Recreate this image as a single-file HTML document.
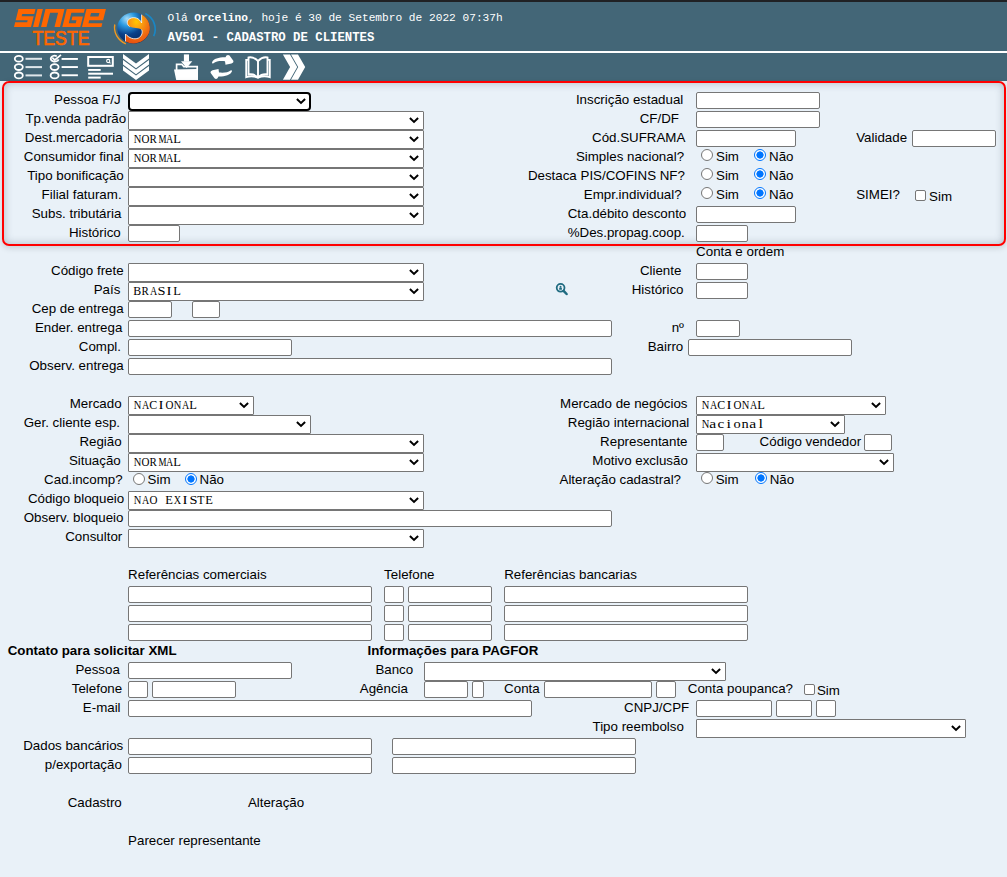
<!DOCTYPE html>
<html><head><meta charset="utf-8"><title>AV501</title>
<style>
html,body{margin:0;padding:0;}
body{width:1007px;height:877px;overflow:hidden;background:#e9f1f8;}
#pg{position:relative;width:1007px;height:877px;overflow:hidden;background:#e9f1f8;font-family:"Liberation Sans",sans-serif;color:#000;}
#topbar{position:absolute;left:0;top:0;width:1007px;height:2px;background:#202124;}
#hdr{position:absolute;left:0;top:2px;width:1007px;height:49px;background:#436677;}
#wl{position:absolute;left:0;top:51px;width:1007px;height:2px;background:#fff;}
#tb{position:absolute;left:0;top:53px;width:1007px;height:28px;background:#436677;}
#box{position:absolute;left:1.5px;top:81.4px;width:1000px;height:160.3px;border:2px solid #f00;border-radius:7px;box-shadow:inset 0 0 8px rgba(50,70,90,.32),0 2px 6px rgba(0,0,0,.14);}
.t,.b{position:absolute;font-size:13.333px;line-height:15px;white-space:nowrap;}
.b{font-weight:bold;}
.i{position:absolute;box-sizing:border-box;background:#fff;border:1px solid #767676;border-radius:2px;}
.s{position:absolute;box-sizing:border-box;height:19px;background:#fff;border:1px solid #767676;border-radius:1px;}
.s.f{border:2px solid #000;border-radius:4px;}
.sv{position:absolute;left:4px;top:1px;font-family:"Liberation Serif",serif;font-size:12.5px;line-height:15px;white-space:pre;}
.sv i{display:inline-block;width:8px;text-align:center;font-style:normal;}
.sv i b{display:inline-block;font-weight:normal;}
.ch{position:absolute;right:3.9px;top:4.9px;}
.s.f .ch{right:2.9px;top:3.9px;}
.r{position:absolute;box-sizing:border-box;width:12px;height:12px;border:1px solid #767676;border-radius:50%;background:#fff;}
.r.c{border:1px solid #0075ff;background:radial-gradient(circle,#0075ff 0,#0075ff 3.3px,#fff 3.9px,#fff 100%);}
.cb{position:absolute;box-sizing:border-box;width:11px;height:11px;border:1px solid #767676;border-radius:2px;background:#fff;}
.lens{position:absolute;}
.hs{position:absolute;color:#fff;font-family:"Liberation Mono",monospace;white-space:pre;}
.ico{position:absolute;}

</style></head><body>
<div id="pg">
<div id="topbar"></div>
<div id="hdr"></div>
<div id="wl"></div>
<div id="tb"></div>
<!-- SINGE logo -->
<svg class="ico" style="left:10px;top:6px" width="100" height="42" viewBox="0 0 100 42">
 <g fill="#ff6600" transform="translate(4,3) matrix(1,0,-0.25,1,4.5,0)">
  <!-- S: origin x=0 width 17, y 0..18 -->
  <path d="M0 0H17V5H5V7.3H17V18H0V13.3H12V11.3H0Z"/>
  <!-- I -->
  <path d="M19 0H24.4V18H19Z"/>
  <!-- n -->
  <path d="M27 0H46V18H40.5V3.7H32.5V18H27Z"/>
  <!-- G -->
  <path d="M48.3 0H66.3V3.8H53.8V14.3H60.8V11.2H55.8V7.6H66.3V18H48.3Z"/>
  <!-- e -->
  <path d="M68 0H87.4V11.2H73.5V14.2H87.4V18H68ZM73.5 3.9V7.6H81.9V3.9Z" fill-rule="evenodd"/>
 </g>
 <text x="22.5" y="39.3" fill="#ff6600" stroke="#ff6600" stroke-width="0.7" font-family="Liberation Sans" font-size="20.5" textLength="57" lengthAdjust="spacingAndGlyphs">TESTE</text>
</svg>
<!-- sphere logo -->
<svg class="ico" style="left:108px;top:6px" width="50" height="44" viewBox="0 0 50 44">
 <defs>
  <radialGradient id="gb" cx="0.3" cy="0.2" r="0.85"><stop offset="0" stop-color="#a8dcf8"/><stop offset="0.28" stop-color="#2a9ae0"/><stop offset="0.6" stop-color="#0b418a"/><stop offset="1" stop-color="#04235a"/></radialGradient>
  <radialGradient id="go" cx="0.45" cy="0.25" r="0.75"><stop offset="0" stop-color="#ffc800"/><stop offset="0.3" stop-color="#faa010"/><stop offset="0.7" stop-color="#f06e12"/><stop offset="1" stop-color="#e8520e"/></radialGradient>
 </defs>
 <path d="M6.8 18.5 A18.7 17.7 0 0 0 17.8 37.8" fill="none" stroke="#f59a1e" stroke-width="1.4"/>
 <path d="M37.3 7.6 A18.7 17.7 0 0 1 45.7 30.2" fill="none" stroke="#1a86c4" stroke-width="1.7"/>
 <ellipse cx="25.6" cy="22" rx="16.3" ry="15.4" fill="url(#gb)"/>
 <path d="M33.6 8.6 A16.3 15.4 0 1 1 17.5 35.4 L17.5 28 C21 32 26 34 30.5 32 C34 30 35 26 33.5 23.5 C31 21.5 25 22.5 21.5 20.5 C18.5 18.5 18.5 14.5 22 12.5 C26 10.5 31.5 12 33.6 17 Z" fill="url(#go)"/>
 <path d="M33.6 8.6 L33.6 17 C31.5 12 26 10.5 22 12.5 C18.5 14.5 18.5 18.5 21.5 20.5" fill="none" stroke="#fff" stroke-width="0.8"/>
 <path d="M33.5 23.5 C35 26 34 30 30.5 32 C26 34 21 32 17.5 28 L17.5 35.4" fill="none" stroke="#fff" stroke-width="0.8"/>
</svg>
<span class="hs" style="left:167.5px;top:11px;font-size:11.18px;line-height:14px">Olá <b>Orcelino</b>, hoje é 30 de Setembro de 2022 07:37h</span>
<span class="hs" style="left:167.5px;top:31px;font-size:12.32px;line-height:14px;font-weight:bold">AV501 - CADASTRO DE CLIENTES</span>
<!-- toolbar icons -->
<svg class="ico" style="left:0px;top:53px" width="320" height="28" viewBox="0 53 320 28">
 <g fill="none" stroke="#fff" stroke-width="1.8">
  <ellipse cx="18.8" cy="58.8" rx="4" ry="2.9"/>
  <ellipse cx="18.8" cy="67.1" rx="4" ry="2.9"/>
  <ellipse cx="18.8" cy="75.4" rx="4" ry="2.9"/>
  <ellipse cx="54.6" cy="67.1" rx="4" ry="2.9"/>
  <ellipse cx="54.6" cy="75.4" rx="4" ry="2.9"/>
  <path d="M56.8 56.2A4 2.9 0 1 0 58.6 59.4"/>
  <path d="M52.3 57.6L54.8 60L61 54.8" stroke-width="1.7"/>
 </g>
 <g fill="#dfe6ea">
  <rect x="25.5" y="57.8" width="16.5" height="2"/>
  <rect x="25.5" y="66.1" width="16.5" height="2"/>
  <rect x="25.5" y="74.4" width="16.5" height="2"/>
 </g>
 <g fill="#fff">
  <rect x="61.6" y="58" width="16.3" height="1.9"/>
  <rect x="61.6" y="66.1" width="16.3" height="1.9"/>
  <rect x="61.6" y="74.3" width="16.3" height="1.9"/>
 </g>
 <!-- icon 3 -->
 <rect x="88.2" y="57" width="24.6" height="8.8" fill="none" stroke="#fff" stroke-width="2"/>
 <circle cx="108.2" cy="61" r="1.6" fill="none" stroke="#fff" stroke-width="1.1"/>
 <path d="M109.3 62.1l1.2 1.2" stroke="#fff" stroke-width="1.1"/>
 <g fill="#fff">
  <rect x="88.2" y="69" width="12.5" height="1.9"/>
  <rect x="88.2" y="72.7" width="24.8" height="2"/>
  <rect x="88.2" y="76.6" width="12.5" height="2"/>
 </g>
 <!-- icon 4 triple chevron -->
 <g fill="#fff">
  <path d="M123 54L136 63.6L149 54V58.6L136 68.2L123 58.6Z"/>
  <path d="M123 60L136 69.6L149 60V64.6L136 74.2L123 64.6Z"/>
  <path d="M123 66L136 75.6L149 66V70.6L136 80L123 70.6Z"/>
 </g>
 <!-- icon 5 folder download -->
 <path d="M176.6 70V64.3H181.8L183.8 66.7H197.2V70" fill="none" stroke="#fff" stroke-width="1.7"/>
 <g fill="#fff">
  <rect x="183.9" y="54.4" width="5.1" height="7.2"/>
  <path d="M181 61.2H192.3L186.6 68Z"/>
  <path d="M174 69.6L198 69V80H176.2Z"/>
 </g>
 <!-- icon 6 refresh -->
 <g fill="#fff">
  <path d="M212 62.5C213.5 58.5 219 57.2 225.5 57.3L226.5 55.5Q228 54.3 229.5 55.5L233.5 61Q233.8 62.8 231.5 63.5L225.5 64.8L225 61.2C220 60.8 216 61.2 213.5 63.2Q212 64 212 62.5Z"/>
  <path d="M232 71.3C230.5 75.3 225 76.6 218.5 76.5L217.5 78.3Q216 79.5 214.5 78.3L210.5 72.8Q210.2 71 212.5 70.3L218.5 69L219 72.6C224 73 228 72.6 230.5 70.6Q232 69.8 232 71.3Z"/>
 </g>
 <!-- icon 7 book -->
 <g fill="none" stroke="#fff" stroke-width="1.9">
  <path d="M258 61C255 58 251 57 248.5 57.5V74.5C251.5 74 255 74.5 258 77.5C261 74.5 264.5 74 267.5 74.5V57.5C265 57 261 58 258 61Z"/>
  <path d="M258 61V77"/>
  <path d="M248.6 59.8H246.2V77.2C250 75.8 254.5 76.2 258 77.6C261.5 76.2 266 75.8 269.8 77.2V59.8H267.4" stroke-width="1.8"/>
 </g>
 <!-- icon 8 double chevron -->
 <g fill="#fff">
  <path d="M282.9 54.5H290L297.2 67.1L290 79.8H282.9L290.1 67.1Z"/>
  <path d="M291 54.5H298L305.2 67.1L298 79.8H291L298.2 67.1Z"/>
 </g>
</svg>

<div id="box"></div>
<span class="t" style="left:54.0px;top:91.9px">Pessoa F/J</span>
<span class="t" style="left:25.4px;top:110.9px">Tp.venda padrão</span>
<span class="t" style="left:24.8px;top:129.9px">Dest.mercadoria</span>
<span class="t" style="left:23.8px;top:148.9px">Consumidor final</span>
<span class="t" style="left:27.2px;top:167.9px">Tipo bonificação</span>
<span class="t" style="left:41.6px;top:186.9px">Filial faturam.</span>
<span class="t" style="left:31.7px;top:205.9px">Subs. tributária</span>
<span class="t" style="left:68.9px;top:224.9px">Histórico</span>
<div class="s f" style="left:128px;top:92px;width:183px"><svg class="ch" width="10" height="7" viewBox="0 0 10 7"><path d="M0.9 1.1L5 4.9L9.1 1.1" fill="none" stroke="#000" stroke-width="2"/></svg></div>
<div class="s" style="left:128px;top:111px;width:296px"><svg class="ch" width="10" height="7" viewBox="0 0 10 7"><path d="M0.9 1.1L5 4.9L9.1 1.1" fill="none" stroke="#000" stroke-width="2"/></svg></div>
<div class="s" style="left:128px;top:130px;width:296px"><span class="sv"><i><b style="transform:scaleX(0.84)">N</b></i><i><b style="transform:scaleX(0.88)">O</b></i><i><b style="transform:scaleX(0.88)">R</b></i><i><b style="transform:scaleX(0.72)">M</b></i><i><b style="transform:scaleX(0.8)">A</b></i><i><b style="transform:scaleX(1.0)">L</b></i></span><svg class="ch" width="10" height="7" viewBox="0 0 10 7"><path d="M0.9 1.1L5 4.9L9.1 1.1" fill="none" stroke="#000" stroke-width="2"/></svg></div>
<div class="s" style="left:128px;top:149px;width:296px"><span class="sv"><i><b style="transform:scaleX(0.84)">N</b></i><i><b style="transform:scaleX(0.88)">O</b></i><i><b style="transform:scaleX(0.88)">R</b></i><i><b style="transform:scaleX(0.72)">M</b></i><i><b style="transform:scaleX(0.8)">A</b></i><i><b style="transform:scaleX(1.0)">L</b></i></span><svg class="ch" width="10" height="7" viewBox="0 0 10 7"><path d="M0.9 1.1L5 4.9L9.1 1.1" fill="none" stroke="#000" stroke-width="2"/></svg></div>
<div class="s" style="left:128px;top:168px;width:296px"><svg class="ch" width="10" height="7" viewBox="0 0 10 7"><path d="M0.9 1.1L5 4.9L9.1 1.1" fill="none" stroke="#000" stroke-width="2"/></svg></div>
<div class="s" style="left:128px;top:187px;width:296px"><svg class="ch" width="10" height="7" viewBox="0 0 10 7"><path d="M0.9 1.1L5 4.9L9.1 1.1" fill="none" stroke="#000" stroke-width="2"/></svg></div>
<div class="s" style="left:128px;top:206px;width:296px"><svg class="ch" width="10" height="7" viewBox="0 0 10 7"><path d="M0.9 1.1L5 4.9L9.1 1.1" fill="none" stroke="#000" stroke-width="2"/></svg></div>
<div class="i" style="left:128px;top:225px;width:52px;height:17px"></div>
<span class="t" style="left:575.9px;top:91.9px">Inscrição estadual</span>
<span class="t" style="left:639.7px;top:110.9px">CF/DF</span>
<span class="t" style="left:592.0px;top:129.9px">Cód.SUFRAMA</span>
<span class="t" style="left:575.9px;top:148.9px">Simples nacional?</span>
<span class="t" style="left:527.9px;top:167.9px">Destaca PIS/COFINS NF?</span>
<span class="t" style="left:583.8px;top:186.9px">Empr.individual?</span>
<span class="t" style="left:567.7px;top:205.9px">Cta.débito desconto</span>
<span class="t" style="left:567.7px;top:224.9px">%Des.propag.coop.</span>
<span class="t" style="left:856.2px;top:129.9px">Validade</span>
<span class="t" style="left:856.2px;top:186.9px">SIMEI?</span>
<div class="i" style="left:696px;top:92px;width:124px;height:17px"></div>
<div class="i" style="left:696px;top:111px;width:124px;height:17px"></div>
<div class="i" style="left:696px;top:130px;width:100px;height:17px"></div>
<div class="i" style="left:912px;top:130px;width:84px;height:17px"></div>
<div class="i" style="left:696px;top:206px;width:100px;height:17px"></div>
<div class="i" style="left:696px;top:225px;width:52px;height:17px"></div>
<div class="r" style="left:701px;top:149px"></div>
<span class="t" style="left:716.0px;top:148.9px">Sim</span>
<div class="r c" style="left:754px;top:149px"></div>
<span class="t" style="left:769.0px;top:148.9px">Não</span>
<div class="r" style="left:701px;top:168px"></div>
<span class="t" style="left:716.0px;top:167.9px">Sim</span>
<div class="r c" style="left:754px;top:168px"></div>
<span class="t" style="left:769.0px;top:167.9px">Não</span>
<div class="r" style="left:701px;top:187px"></div>
<span class="t" style="left:716.0px;top:186.9px">Sim</span>
<div class="r c" style="left:754px;top:187px"></div>
<span class="t" style="left:769.0px;top:186.9px">Não</span>
<div class="cb" style="left:915px;top:190px"></div>
<span class="t" style="left:929.1px;top:188.6px">Sim</span>
<span class="t" style="left:696.1px;top:243.9px">Conta e ordem</span>
<span class="t" style="left:51.0px;top:262.9px">Código frete</span>
<span class="t" style="left:93.7px;top:281.9px">País</span>
<span class="t" style="left:31.7px;top:300.9px">Cep de entrega</span>
<span class="t" style="left:34.9px;top:319.9px">Ender. entrega</span>
<span class="t" style="left:78.8px;top:338.9px">Compl.</span>
<span class="t" style="left:29.2px;top:357.9px">Observ. entrega</span>
<div class="s" style="left:128px;top:263px;width:296px"><svg class="ch" width="10" height="7" viewBox="0 0 10 7"><path d="M0.9 1.1L5 4.9L9.1 1.1" fill="none" stroke="#000" stroke-width="2"/></svg></div>
<div class="s" style="left:128px;top:282px;width:296px"><span class="sv"><i><b style="transform:scaleX(0.95)">B</b></i><i><b style="transform:scaleX(0.88)">R</b></i><i><b style="transform:scaleX(0.8)">A</b></i><i><b style="transform:scaleX(1.15)">S</b></i><i><b style="transform:scaleX(1.2)">I</b></i><i><b style="transform:scaleX(1.0)">L</b></i></span><svg class="ch" width="10" height="7" viewBox="0 0 10 7"><path d="M0.9 1.1L5 4.9L9.1 1.1" fill="none" stroke="#000" stroke-width="2"/></svg></div>
<div class="i" style="left:128px;top:301px;width:44px;height:17px"></div>
<div class="i" style="left:192px;top:301px;width:28px;height:17px"></div>
<div class="i" style="left:128px;top:320px;width:484px;height:17px"></div>
<div class="i" style="left:128px;top:339px;width:164px;height:17px"></div>
<div class="i" style="left:128px;top:358px;width:484px;height:17px"></div>
<span class="t" style="left:639.9px;top:262.9px">Cliente</span>
<span class="t" style="left:631.7px;top:281.9px">Histórico</span>
<span class="t" style="left:671.7px;top:319.9px">nº</span>
<span class="t" style="left:647.7px;top:338.9px">Bairro</span>
<div class="i" style="left:696px;top:263px;width:52px;height:17px"></div>
<div class="i" style="left:696px;top:282px;width:52px;height:17px"></div>
<div class="i" style="left:696px;top:320px;width:44px;height:17px"></div>
<div class="i" style="left:688px;top:339px;width:164px;height:17px"></div>
<svg class="lens" style="left:554px;top:282px" width="16" height="16" viewBox="0 0 16 16"><circle cx="6.6" cy="5.8" r="3.9" fill="none" stroke="#1f6b80" stroke-width="1.8"/><path d="M9.6 8.9L12.6 12" stroke="#1f6b80" stroke-width="2.5" stroke-linecap="round"/><path d="M5.2 7.7h2.7v-1.3a1.35 1.2 0 0 0-2.7 0z" fill="#1f6b80"/><circle cx="6.55" cy="4.6" r="0.95" fill="#1f6b80"/></svg>
<span class="t" style="left:69.7px;top:395.9px">Mercado</span>
<span class="t" style="left:23.7px;top:414.9px">Ger. cliente esp.</span>
<span class="t" style="left:79.4px;top:433.9px">Região</span>
<span class="t" style="left:68.9px;top:452.9px">Situação</span>
<span class="t" style="left:44.1px;top:471.9px">Cad.incomp?</span>
<span class="t" style="left:27.9px;top:490.9px">Código bloqueio</span>
<span class="t" style="left:23.7px;top:509.9px">Observ. bloqueio</span>
<span class="t" style="left:65.2px;top:528.9px">Consultor</span>
<div class="s" style="left:128px;top:396px;width:126px"><span class="sv"><i><b style="transform:scaleX(0.84)">N</b></i><i><b style="transform:scaleX(0.8)">A</b></i><i><b style="transform:scaleX(0.95)">C</b></i><i><b style="transform:scaleX(1.2)">I</b></i><i><b style="transform:scaleX(0.88)">O</b></i><i><b style="transform:scaleX(0.84)">N</b></i><i><b style="transform:scaleX(0.8)">A</b></i><i><b style="transform:scaleX(1.0)">L</b></i></span><svg class="ch" width="10" height="7" viewBox="0 0 10 7"><path d="M0.9 1.1L5 4.9L9.1 1.1" fill="none" stroke="#000" stroke-width="2"/></svg></div>
<div class="s" style="left:128px;top:415px;width:183px"><svg class="ch" width="10" height="7" viewBox="0 0 10 7"><path d="M0.9 1.1L5 4.9L9.1 1.1" fill="none" stroke="#000" stroke-width="2"/></svg></div>
<div class="s" style="left:128px;top:434px;width:296px"><svg class="ch" width="10" height="7" viewBox="0 0 10 7"><path d="M0.9 1.1L5 4.9L9.1 1.1" fill="none" stroke="#000" stroke-width="2"/></svg></div>
<div class="s" style="left:128px;top:453px;width:296px"><span class="sv"><i><b style="transform:scaleX(0.84)">N</b></i><i><b style="transform:scaleX(0.88)">O</b></i><i><b style="transform:scaleX(0.88)">R</b></i><i><b style="transform:scaleX(0.72)">M</b></i><i><b style="transform:scaleX(0.8)">A</b></i><i><b style="transform:scaleX(1.0)">L</b></i></span><svg class="ch" width="10" height="7" viewBox="0 0 10 7"><path d="M0.9 1.1L5 4.9L9.1 1.1" fill="none" stroke="#000" stroke-width="2"/></svg></div>
<div class="r" style="left:133px;top:473px"></div>
<span class="t" style="left:147.6px;top:471.9px">Sim</span>
<div class="r c" style="left:185px;top:473px"></div>
<span class="t" style="left:199.5px;top:471.9px">Não</span>
<div class="s" style="left:128px;top:491px;width:296px"><span class="sv"><i><b style="transform:scaleX(0.84)">N</b></i><i><b style="transform:scaleX(0.8)">A</b></i><i><b style="transform:scaleX(0.88)">O</b></i><i>&nbsp;</i><i><b style="transform:scaleX(1.0)">E</b></i><i><b style="transform:scaleX(0.82)">X</b></i><i><b style="transform:scaleX(1.2)">I</b></i><i><b style="transform:scaleX(1.15)">S</b></i><i><b style="transform:scaleX(0.95)">T</b></i><i><b style="transform:scaleX(1.0)">E</b></i></span><svg class="ch" width="10" height="7" viewBox="0 0 10 7"><path d="M0.9 1.1L5 4.9L9.1 1.1" fill="none" stroke="#000" stroke-width="2"/></svg></div>
<div class="i" style="left:128px;top:510px;width:484px;height:17px"></div>
<div class="s" style="left:128px;top:529px;width:296px"><svg class="ch" width="10" height="7" viewBox="0 0 10 7"><path d="M0.9 1.1L5 4.9L9.1 1.1" fill="none" stroke="#000" stroke-width="2"/></svg></div>
<span class="t" style="left:560.1px;top:395.9px">Mercado de negócios</span>
<span class="t" style="left:567.8px;top:414.9px">Região internacional</span>
<span class="t" style="left:600.1px;top:433.9px">Representante</span>
<span class="t" style="left:759.6px;top:433.9px">Código vendedor</span>
<span class="t" style="left:592.3px;top:452.9px">Motivo exclusão</span>
<span class="t" style="left:559.5px;top:471.9px">Alteração cadastral?</span>
<div class="s" style="left:696px;top:396px;width:190px"><span class="sv"><i><b style="transform:scaleX(0.84)">N</b></i><i><b style="transform:scaleX(0.8)">A</b></i><i><b style="transform:scaleX(0.95)">C</b></i><i><b style="transform:scaleX(1.2)">I</b></i><i><b style="transform:scaleX(0.88)">O</b></i><i><b style="transform:scaleX(0.84)">N</b></i><i><b style="transform:scaleX(0.8)">A</b></i><i><b style="transform:scaleX(1.0)">L</b></i></span><svg class="ch" width="10" height="7" viewBox="0 0 10 7"><path d="M0.9 1.1L5 4.9L9.1 1.1" fill="none" stroke="#000" stroke-width="2"/></svg></div>
<div class="s" style="left:696px;top:415px;width:149px"><span class="sv"><i><b style="transform:scaleX(0.84)">N</b></i><i><b style="transform:scaleX(1.25)">a</b></i><i><b style="transform:scaleX(1.22)">c</b></i><i><b style="transform:scaleX(1.3)">i</b></i><i><b style="transform:scaleX(1.15)">o</b></i><i><b style="transform:scaleX(1.15)">n</b></i><i><b style="transform:scaleX(1.25)">a</b></i><i><b style="transform:scaleX(1.3)">l</b></i></span><svg class="ch" width="10" height="7" viewBox="0 0 10 7"><path d="M0.9 1.1L5 4.9L9.1 1.1" fill="none" stroke="#000" stroke-width="2"/></svg></div>
<div class="i" style="left:696px;top:434px;width:28px;height:17px"></div>
<div class="i" style="left:864px;top:434px;width:28px;height:17px"></div>
<div class="s" style="left:696px;top:453px;width:198px"><svg class="ch" width="10" height="7" viewBox="0 0 10 7"><path d="M0.9 1.1L5 4.9L9.1 1.1" fill="none" stroke="#000" stroke-width="2"/></svg></div>
<div class="r" style="left:701px;top:472px"></div>
<span class="t" style="left:715.7px;top:471.9px">Sim</span>
<div class="r c" style="left:754.5px;top:472px"></div>
<span class="t" style="left:769.7px;top:471.9px">Não</span>
<span class="t" style="left:128.1px;top:566.9px">Referências comerciais</span>
<span class="t" style="left:384.1px;top:566.9px">Telefone</span>
<span class="t" style="left:504.2px;top:566.9px">Referências bancarias</span>
<div class="i" style="left:128px;top:586px;width:244px;height:17px"></div>
<div class="i" style="left:384px;top:586px;width:20px;height:17px"></div>
<div class="i" style="left:408px;top:586px;width:84px;height:17px"></div>
<div class="i" style="left:504px;top:586px;width:244px;height:17px"></div>
<div class="i" style="left:128px;top:605px;width:244px;height:17px"></div>
<div class="i" style="left:384px;top:605px;width:20px;height:17px"></div>
<div class="i" style="left:408px;top:605px;width:84px;height:17px"></div>
<div class="i" style="left:504px;top:605px;width:244px;height:17px"></div>
<div class="i" style="left:128px;top:624px;width:244px;height:17px"></div>
<div class="i" style="left:384px;top:624px;width:20px;height:17px"></div>
<div class="i" style="left:408px;top:624px;width:84px;height:17px"></div>
<div class="i" style="left:504px;top:624px;width:244px;height:17px"></div>
<span class="b" style="left:7.7px;top:642.9px">Contato para solicitar XML</span>
<span class="b" style="left:367.5px;top:642.9px">Informações para PAGFOR</span>
<span class="t" style="left:75.4px;top:661.9px">Pessoa</span>
<span class="t" style="left:375.4px;top:661.9px">Banco</span>
<div class="i" style="left:128px;top:662px;width:164px;height:17px"></div>
<div class="s" style="left:424px;top:662px;width:302px"><svg class="ch" width="10" height="7" viewBox="0 0 10 7"><path d="M0.9 1.1L5 4.9L9.1 1.1" fill="none" stroke="#000" stroke-width="2"/></svg></div>
<span class="t" style="left:71.8px;top:680.9px">Telefone</span>
<div class="i" style="left:128px;top:681px;width:20px;height:17px"></div>
<div class="i" style="left:152px;top:681px;width:84px;height:17px"></div>
<span class="t" style="left:359.8px;top:680.9px">Agência</span>
<div class="i" style="left:424px;top:681px;width:44px;height:17px"></div>
<div class="i" style="left:472px;top:681px;width:12px;height:17px"></div>
<span class="t" style="left:504.1px;top:680.9px">Conta</span>
<div class="i" style="left:544px;top:681px;width:108px;height:17px"></div>
<div class="i" style="left:656px;top:681px;width:20px;height:17px"></div>
<span class="t" style="left:687.8px;top:680.9px">Conta poupanca?</span>
<div class="cb" style="left:803.5px;top:684px"></div>
<span class="t" style="left:816.9px;top:682.6px">Sim</span>
<span class="t" style="left:82.8px;top:699.9px">E-mail</span>
<div class="i" style="left:128px;top:700px;width:404px;height:17px"></div>
<span class="t" style="left:624.0px;top:699.9px">CNPJ/CPF</span>
<div class="i" style="left:696px;top:700px;width:76px;height:17px"></div>
<div class="i" style="left:776px;top:700px;width:36px;height:17px"></div>
<div class="i" style="left:816px;top:700px;width:20px;height:17px"></div>
<span class="t" style="left:592.5px;top:718.9px">Tipo reembolso</span>
<div class="s" style="left:696px;top:719px;width:270px"><svg class="ch" width="10" height="7" viewBox="0 0 10 7"><path d="M0.9 1.1L5 4.9L9.1 1.1" fill="none" stroke="#000" stroke-width="2"/></svg></div>
<span class="t" style="left:23.2px;top:737.9px">Dados bancários</span>
<span class="t" style="left:44.8px;top:756.9px">p/exportação</span>
<div class="i" style="left:128px;top:738px;width:244px;height:17px"></div>
<div class="i" style="left:392px;top:738px;width:244px;height:17px"></div>
<div class="i" style="left:128px;top:757px;width:244px;height:17px"></div>
<div class="i" style="left:392px;top:757px;width:244px;height:17px"></div>
<span class="t" style="left:67.7px;top:794.9px">Cadastro</span>
<span class="t" style="left:247.9px;top:794.9px">Alteração</span>
<span class="t" style="left:128.1px;top:832.9px">Parecer representante</span>
</div>
</body></html>
